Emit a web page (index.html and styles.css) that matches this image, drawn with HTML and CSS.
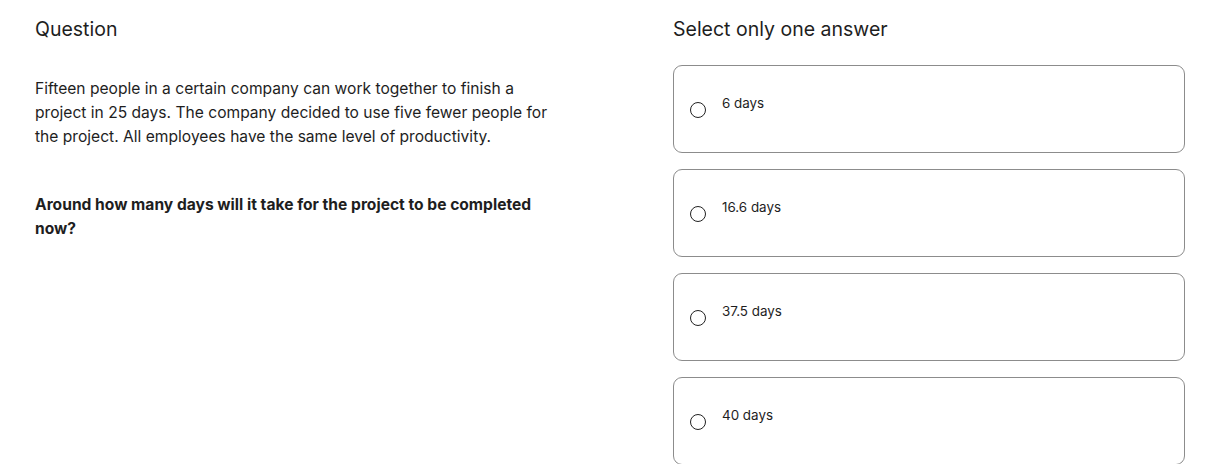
FILE: index.html
```html
<!DOCTYPE html>
<html lang="en">
<head>
    <meta charset="UTF-8">
    <meta name="viewport" content="width=device-width, initial-scale=1.0">
    <title>Question</title>
    <link rel="stylesheet" href="styles.css">
</head>
<body>
<div class="quiz">
    <!-- question side -->
    <div class="question">
        <h2 class="title">Question</h2>
        <p class="stem">Fifteen people in a certain company can work together to finish a project in 25 days. The company decided to use five fewer people for the project. All employees have the same level of productivity.</p>
        <p class="ask">Around how many days will it take for the project to be completed now?</p>
    </div>

    <!-- answers side -->
    <div class="answers">
        <h2 class="title">Select only one answer</h2>
        <label class="option">
            <input type="radio" name="answer">
            <span class="radio"></span>
            <span class="text">6 days</span>
        </label>
        <label class="option">
            <input type="radio" name="answer">
            <span class="radio"></span>
            <span class="text">16.6 days</span>
        </label>
        <label class="option">
            <input type="radio" name="answer">
            <span class="radio"></span>
            <span class="text">37.5 days</span>
        </label>
        <label class="option">
            <input type="radio" name="answer">
            <span class="radio"></span>
            <span class="text">40 days</span>
        </label>
    </div>
</div>
</body>
</html>
```

FILE: styles.css
```css
:root {
    --text-dark: #1e1e1e;
    --border-grey: #8c8c8c;
}

body {
    margin: 0;
    padding: 0;
    background: #ffffff;
    color: var(--text-dark);
    font-family: 'Inter', 'Liberation Sans', sans-serif;
}

.quiz {
    display: flex;
    gap: 108px;
    padding: 16px 26px 0 35px;
}

.question {
    width: 530px;
}

.answers {
    width: 512px;
}

.title {
    margin: 0;
    font-size: 19.5px;
    font-weight: 400;
    line-height: 26px;
}

.stem {
    margin: 35px 0 0;
    font-size: 15.6px;
    line-height: 24px;
}

.ask {
    margin: 44px 0 0;
    font-size: 15.6px;
    font-weight: 700;
    line-height: 24px;
}

.answers .title {
    margin-bottom: 23px;
}

.option {
    display: flex;
    align-items: center;
    height: 86px;
    padding: 0 16px;
    border: 1px solid var(--border-grey);
    border-radius: 9px;
    margin-bottom: 16px;
    cursor: pointer;
}

.option input {
    display: none;
}

.radio {
    width: 14px;
    height: 14px;
    border: 1.5px solid #222;
    border-radius: 50%;
    margin: 0 16px 0 0;
    position: relative;
    top: 1px;
}

.text {
    font-size: 13.4px;
    line-height: 20px;
    margin-bottom: 12px;
}

.option input:checked + .radio::after {
    content: '';
    position: absolute;
    inset: 3px;
    border-radius: 50%;
    background: #222;
}
```
